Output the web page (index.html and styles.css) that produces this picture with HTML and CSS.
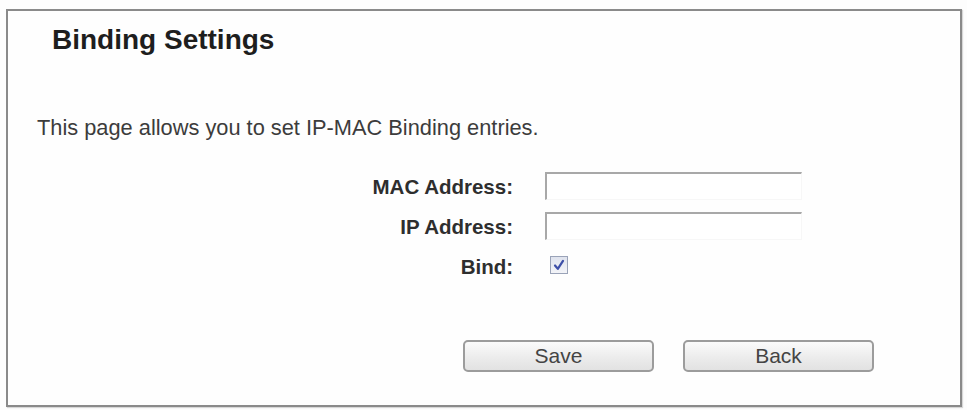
FILE: index.html
```html
<!DOCTYPE html>
<html>
<head>
<meta charset="utf-8">
<link rel="stylesheet" href="styles.css">
</head>
<body>
<div class="panel">
  <h1 class="title">Binding Settings</h1>
  <p class="desc">This page allows you to set IP-MAC Binding entries.</p>
  <div class="form">
    <label class="label">MAC Address:</label>
    <div class="field"><span class="input"></span></div>
    <label class="label">IP Address:</label>
    <div class="field"><span class="input"></span></div>
    <label class="label">Bind:</label>
    <div class="field">
      <span class="check">
        <svg width="12" height="12" viewBox="0 0 12 12"><path d="M2 6.5 L4.8 9.8 L10 1.8" fill="none" stroke="#3d4fa8" stroke-width="2.2" stroke-linecap="round" stroke-linejoin="round"/></svg>
      </span>
    </div>
  </div>
  <div class="buttons">
    <button class="btn">Save</button>
    <button class="btn">Back</button>
  </div>
</div>
</body>
</html>
```
FILE: styles.css
```css
html, body {
  margin: 0;
  padding: 0;
  background: #fdfdfd;
}
body {
  font-family: "Liberation Sans", Arial, sans-serif;
  width: 967px;
  height: 410px;
  overflow: hidden;
}
.panel {
  box-sizing: border-box;
  margin: 9px 0 0 6px;
  width: 956px;
  height: 398px;
  border: 2px solid #8a8a8a;
  box-shadow: 1px 1px 1px rgba(0,0,0,0.15);
  background: #fefefe;
  padding-top: 13px;
}
.title {
  margin: 0 0 0 44px;
  font-size: 28px;
  line-height: 32px;
  font-weight: bold;
  color: #1e1e1e;
}
.desc {
  margin: 60px 0 0 29px;
  font-size: 21.8px;
  line-height: 24px;
  color: #3c3c3c;
}
.form {
  margin-top: 25px;
  display: grid;
  grid-template-columns: 505px 257px;
  column-gap: 32px;
  grid-auto-rows: 40px;
}
.label {
  text-align: right;
  font-size: 20.5px;
  font-weight: bold;
  color: #2e2e2e;
  line-height: 24px;
  align-self: center;
  margin-top: 4px;
}
.field {
  display: flex;
  align-items: center;
}
.input {
  display: block;
  box-sizing: border-box;
  width: 257px;
  height: 28px;
  border-top: 2px solid #a8a8a8;
  border-left: 2px solid #a8a8a8;
  border-right: 1px solid #f7f7f7;
  border-bottom: 1px solid #f7f7f7;
  background: #fff;
  margin-top: 2px;
}
.check {
  box-sizing: border-box;
  width: 18px;
  height: 18px;
  margin-left: 5px;
  border: 1px solid #9aa3b8;
  background: linear-gradient(#dfe3ee, #f3f4f8);
  display: flex;
  align-items: center;
  justify-content: center;
}
.buttons {
  display: flex;
  gap: 29px;
  margin: 55px 0 0 455px;
}
.btn {
  box-sizing: border-box;
  width: 191px;
  height: 32px;
  border: 2px solid #9c9c9c;
  border-radius: 5px;
  background: linear-gradient(#fbfbfb, #ececec 55%, #e2e2e2);
  font-family: "Liberation Sans", Arial, sans-serif;
  font-size: 21px;
  color: #444;
  padding: 0;
  line-height: 26px;
}
```
